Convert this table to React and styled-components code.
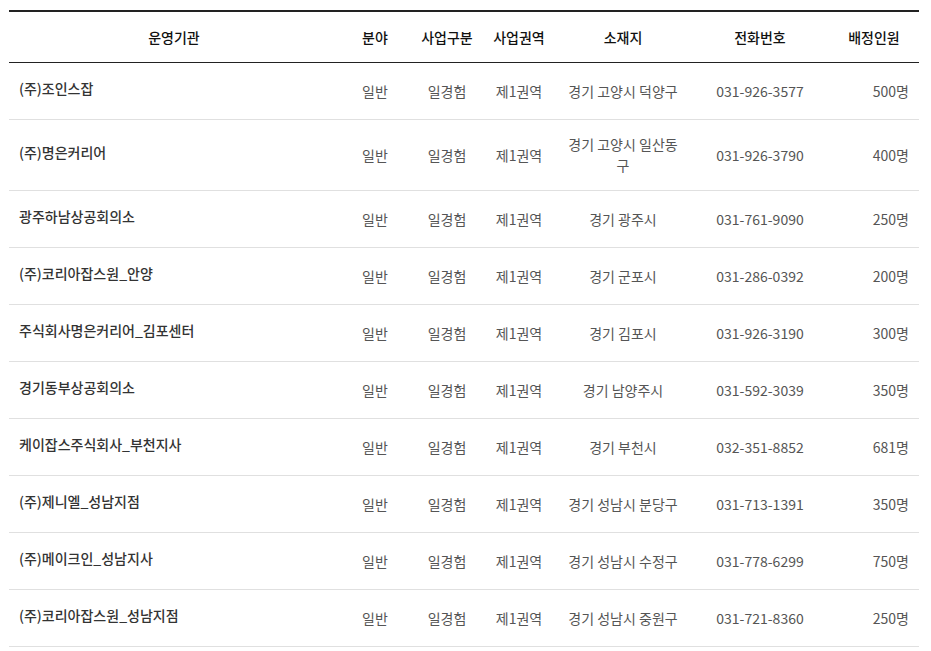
import styled, { createGlobalStyle } from "styled-components"

const GlobalStyle = createGlobalStyle`
  body {
    margin: 0;
    background: #fff;
    font-family: "Noto Sans CJK KR", "Noto Sans", sans-serif;
  }
`

const rows = [
  ["(주)조인스잡", "일반", "일경험", "제1권역", "경기 고양시 덕양구", "031-926-3577", "500명"],
  ["(주)명은커리어", "일반", "일경험", "제1권역", "경기 고양시 일산동구", "031-926-3790", "400명"],
  ["광주하남상공회의소", "일반", "일경험", "제1권역", "경기 광주시", "031-761-9090", "250명"],
  ["(주)코리아잡스원_안양", "일반", "일경험", "제1권역", "경기 군포시", "031-286-0392", "200명"],
  ["주식회사명은커리어_김포센터", "일반", "일경험", "제1권역", "경기 김포시", "031-926-3190", "300명"],
  ["경기동부상공회의소", "일반", "일경험", "제1권역", "경기 남양주시", "031-592-3039", "350명"],
  ["케이잡스주식회사_부천지사", "일반", "일경험", "제1권역", "경기 부천시", "032-351-8852", "681명"],
  ["(주)제니엘_성남지점", "일반", "일경험", "제1권역", "경기 성남시 분당구", "031-713-1391", "350명"],
  ["(주)메이크인_성남지사", "일반", "일경험", "제1권역", "경기 성남시 수정구", "031-778-6299", "750명"],
  ["(주)코리아잡스원_성남지점", "일반", "일경험", "제1권역", "경기 성남시 중원구", "031-721-8360", "250명"],
]

const columns = [
  { title: "운영기관", width: 330 },
  { title: "분야", width: 72 },
  { title: "사업구분", width: 72 },
  { title: "사업권역", width: 72 },
  { title: "소재지", width: 136 },
  { title: "전화번호", width: 138 },
  { title: "배정인원", width: 90 },
]

const Wrap = styled.div`
  padding: 10px 12px 0 9px;
`

const Table = styled.table`
  width: 910px;
  border-collapse: collapse;
  table-layout: fixed;
  border-top: 2px solid #222;
  font-size: 14px;
  letter-spacing: 0;
`

const HeadCell = styled.th`
  height: 50px;
  padding: 0;
  text-align: center;
  font-weight: 500;
  color: #111;
  border-bottom: 1px solid #222;
`

const Row = styled.tr`
  border-bottom: 1px solid #e0e0e0;
`

const Cell = styled.td`
  height: 57px;
  box-sizing: border-box;
  padding: 14px 12px;
  line-height: 21px;
  color: #555;
  vertical-align: middle;
  text-align: ${({ $align }) => $align || "center"};
  word-break: break-all;
`

const NameCell = styled(Cell)`
  padding: 11px 10px 17px;
  color: #333;
  font-weight: 500;
`

const AmountCell = styled(Cell)`
  padding-right: 10px;
`

export default function App() {
  return (
    <Wrap>
      <GlobalStyle />
      <Table>
        <colgroup>
          {columns.map((c) => (
            <col key={c.title} style={{ width: c.width }} />
          ))}
        </colgroup>
        <thead>
          <tr>
            {columns.map((c) => (
              <HeadCell key={c.title}>{c.title}</HeadCell>
            ))}
          </tr>
        </thead>
        <tbody>
          {rows.map((r) => (
            <Row key={r[0]}>
              <NameCell $align="left">{r[0]}</NameCell>
              <Cell>{r[1]}</Cell>
              <Cell>{r[2]}</Cell>
              <Cell>{r[3]}</Cell>
              <Cell>{r[4]}</Cell>
              <Cell>{r[5]}</Cell>
              <AmountCell $align="right">{r[6]}</AmountCell>
            </Row>
          ))}
        </tbody>
      </Table>
    </Wrap>
  )
}
